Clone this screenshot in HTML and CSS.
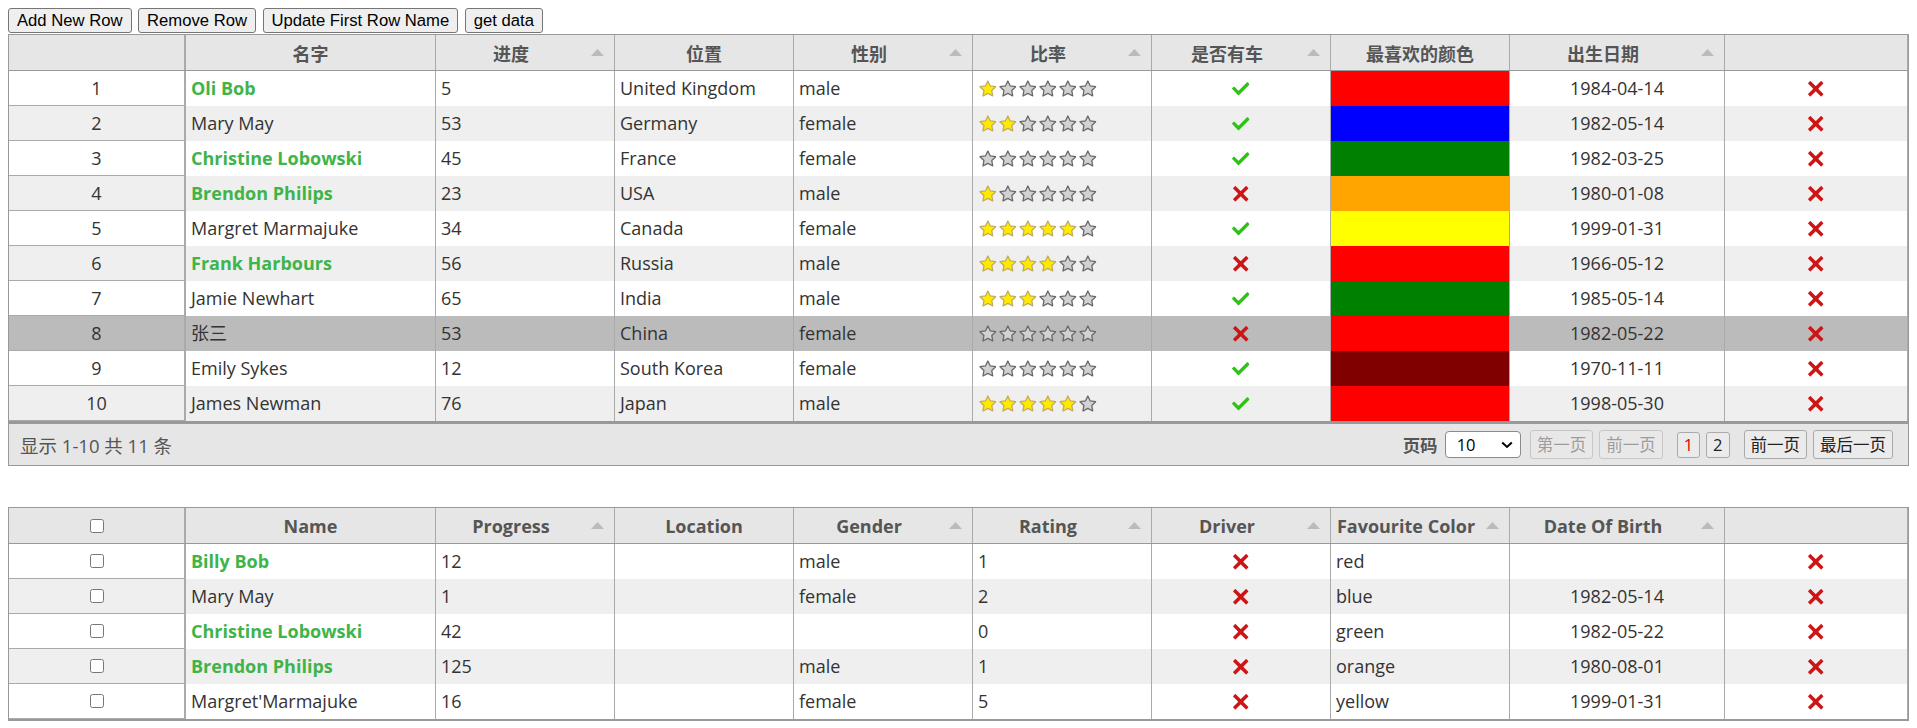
FILE: index.html
```html
<!DOCTYPE html>
<html lang="zh-CN">
<head>
<meta charset="utf-8">
<title>Tabulator</title>
<link rel="stylesheet" href="styles.css">
</head>
<body>
<svg class="defs" aria-hidden="true">
  <defs>
    <symbol id="star-on" viewBox="0 0 512 512"><polygon fill="#FFEA00" stroke="#C1AB60" stroke-width="37.6152" stroke-linecap="round" stroke-linejoin="round" stroke-miterlimit="10" points="259.216,29.942 330.27,173.919 489.16,197.007 374.185,309.08 401.33,467.31 259.216,392.612 117.104,467.31 144.25,309.08 29.274,197.007 188.165,173.919"/></symbol>
    <symbol id="star-off" viewBox="0 0 512 512"><polygon fill="#D2D2D2" stroke="#686868" stroke-width="37.6152" stroke-linecap="round" stroke-linejoin="round" stroke-miterlimit="10" points="259.216,29.942 330.27,173.919 489.16,197.007 374.185,309.08 401.33,467.31 259.216,392.612 117.104,467.31 144.25,309.08 29.274,197.007 188.165,173.919"/></symbol>
    <symbol id="tick" viewBox="0 0 24 24"><path fill="#2DC214" fill-rule="evenodd" clip-rule="evenodd" d="M21.652,3.211c-0.293-0.295-0.77-0.295-1.061,0L9.41,14.34c-0.293,0.297-0.771,0.297-1.062,0L3.449,9.351C3.304,9.203,3.114,9.13,2.923,9.129C2.73,9.128,2.534,9.201,2.387,9.351l-2.165,1.946C0.078,11.445,0,11.63,0,11.823c0,0.194,0.078,0.397,0.223,0.544l4.94,5.184c0.292,0.296,0.771,0.776,1.062,1.07l2.124,2.141c0.292,0.293,0.769,0.293,1.062,0l14.366-14.34c0.293-0.294,0.293-0.777,0-1.071L21.652,3.211z"/></symbol>
    <symbol id="cross" viewBox="0 0 24 24"><path fill="#CE1515" d="M22.245,4.015c0.313,0.313,0.313,0.826,0,1.139l-6.276,6.27c-0.313,0.312-0.313,0.826,0,1.14l6.273,6.272c0.313,0.313,0.313,0.826,0,1.14l-2.285,2.277c-0.314,0.312-0.828,0.312-1.142,0l-6.271-6.271c-0.313-0.313-0.828-0.313-1.141,0l-6.276,6.267c-0.313,0.313-0.826,0.313-1.14,0l-2.282-2.28c-0.313-0.313-0.313-0.826,0-1.14l6.278-6.269c0.313-0.312,0.313-0.826,0-1.14L1.709,5.147c-0.314-0.313-0.314-0.827,0-1.14l2.284-2.278C4.308,1.417,4.821,1.417,5.135,1.73L11.405,8c0.314,0.314,0.828,0.314,1.141,0.001l6.276-6.267c0.312-0.312,0.826-0.312,1.141,0L22.245,4.015z"/></symbol>
  </defs>
</svg>

<div class="toolbar">
  <button class="tbtn">Add New Row</button>
  <button class="tbtn">Remove Row</button>
  <button class="tbtn">Update First Row Name</button>
  <button class="tbtn">get data</button>
</div>

<div class="tabulator">
  <div class="thead grid">
    <div class="hcell first"></div>
    <div class="hcell">名字</div>
    <div class="hcell sort">进度<span class="arrow"></span></div>
    <div class="hcell">位置</div>
    <div class="hcell sort">性别<span class="arrow"></span></div>
    <div class="hcell sort">比率<span class="arrow"></span></div>
    <div class="hcell sort">是否有车<span class="arrow"></span></div>
    <div class="hcell">最喜欢的颜色</div>
    <div class="hcell sort">出生日期<span class="arrow"></span></div>
    <div class="hcell"></div>
  </div>
  <div class="tbody">
    <div class="row grid">
      <div class="cell first">1</div>
      <div class="cell name">Oli Bob</div>
      <div class="cell">5</div>
      <div class="cell">United Kingdom</div>
      <div class="cell">male</div>
      <div class="cell stars"><svg><use href="#star-on"/></svg><svg><use href="#star-off"/></svg><svg><use href="#star-off"/></svg><svg><use href="#star-off"/></svg><svg><use href="#star-off"/></svg><svg><use href="#star-off"/></svg></div>
      <div class="cell icon"><svg><use href="#tick"/></svg></div>
      <div class="cell bg-red"></div>
      <div class="cell center">1984-04-14</div>
      <div class="cell icon"><svg><use href="#cross"/></svg></div>
    </div>
    <div class="row grid even">
      <div class="cell first">2</div>
      <div class="cell">Mary May</div>
      <div class="cell">53</div>
      <div class="cell">Germany</div>
      <div class="cell">female</div>
      <div class="cell stars"><svg><use href="#star-on"/></svg><svg><use href="#star-on"/></svg><svg><use href="#star-off"/></svg><svg><use href="#star-off"/></svg><svg><use href="#star-off"/></svg><svg><use href="#star-off"/></svg></div>
      <div class="cell icon"><svg><use href="#tick"/></svg></div>
      <div class="cell bg-blue"></div>
      <div class="cell center">1982-05-14</div>
      <div class="cell icon"><svg><use href="#cross"/></svg></div>
    </div>
    <div class="row grid">
      <div class="cell first">3</div>
      <div class="cell name">Christine Lobowski</div>
      <div class="cell">45</div>
      <div class="cell">France</div>
      <div class="cell">female</div>
      <div class="cell stars"><svg><use href="#star-off"/></svg><svg><use href="#star-off"/></svg><svg><use href="#star-off"/></svg><svg><use href="#star-off"/></svg><svg><use href="#star-off"/></svg><svg><use href="#star-off"/></svg></div>
      <div class="cell icon"><svg><use href="#tick"/></svg></div>
      <div class="cell bg-green"></div>
      <div class="cell center">1982-03-25</div>
      <div class="cell icon"><svg><use href="#cross"/></svg></div>
    </div>
    <div class="row grid even">
      <div class="cell first">4</div>
      <div class="cell name">Brendon Philips</div>
      <div class="cell">23</div>
      <div class="cell">USA</div>
      <div class="cell">male</div>
      <div class="cell stars"><svg><use href="#star-on"/></svg><svg><use href="#star-off"/></svg><svg><use href="#star-off"/></svg><svg><use href="#star-off"/></svg><svg><use href="#star-off"/></svg><svg><use href="#star-off"/></svg></div>
      <div class="cell icon"><svg><use href="#cross"/></svg></div>
      <div class="cell bg-orange"></div>
      <div class="cell center">1980-01-08</div>
      <div class="cell icon"><svg><use href="#cross"/></svg></div>
    </div>
    <div class="row grid">
      <div class="cell first">5</div>
      <div class="cell">Margret Marmajuke</div>
      <div class="cell">34</div>
      <div class="cell">Canada</div>
      <div class="cell">female</div>
      <div class="cell stars"><svg><use href="#star-on"/></svg><svg><use href="#star-on"/></svg><svg><use href="#star-on"/></svg><svg><use href="#star-on"/></svg><svg><use href="#star-on"/></svg><svg><use href="#star-off"/></svg></div>
      <div class="cell icon"><svg><use href="#tick"/></svg></div>
      <div class="cell bg-yellow"></div>
      <div class="cell center">1999-01-31</div>
      <div class="cell icon"><svg><use href="#cross"/></svg></div>
    </div>
    <div class="row grid even">
      <div class="cell first">6</div>
      <div class="cell name">Frank Harbours</div>
      <div class="cell">56</div>
      <div class="cell">Russia</div>
      <div class="cell">male</div>
      <div class="cell stars"><svg><use href="#star-on"/></svg><svg><use href="#star-on"/></svg><svg><use href="#star-on"/></svg><svg><use href="#star-on"/></svg><svg><use href="#star-off"/></svg><svg><use href="#star-off"/></svg></div>
      <div class="cell icon"><svg><use href="#cross"/></svg></div>
      <div class="cell bg-red"></div>
      <div class="cell center">1966-05-12</div>
      <div class="cell icon"><svg><use href="#cross"/></svg></div>
    </div>
    <div class="row grid">
      <div class="cell first">7</div>
      <div class="cell">Jamie Newhart</div>
      <div class="cell">65</div>
      <div class="cell">India</div>
      <div class="cell">male</div>
      <div class="cell stars"><svg><use href="#star-on"/></svg><svg><use href="#star-on"/></svg><svg><use href="#star-on"/></svg><svg><use href="#star-off"/></svg><svg><use href="#star-off"/></svg><svg><use href="#star-off"/></svg></div>
      <div class="cell icon"><svg><use href="#tick"/></svg></div>
      <div class="cell bg-green"></div>
      <div class="cell center">1985-05-14</div>
      <div class="cell icon"><svg><use href="#cross"/></svg></div>
    </div>
    <div class="row grid hover">
      <div class="cell first">8</div>
      <div class="cell">张三</div>
      <div class="cell">53</div>
      <div class="cell">China</div>
      <div class="cell">female</div>
      <div class="cell stars"><svg><use href="#star-off"/></svg><svg><use href="#star-off"/></svg><svg><use href="#star-off"/></svg><svg><use href="#star-off"/></svg><svg><use href="#star-off"/></svg><svg><use href="#star-off"/></svg></div>
      <div class="cell icon"><svg><use href="#cross"/></svg></div>
      <div class="cell bg-red"></div>
      <div class="cell center">1982-05-22</div>
      <div class="cell icon"><svg><use href="#cross"/></svg></div>
    </div>
    <div class="row grid">
      <div class="cell first">9</div>
      <div class="cell">Emily Sykes</div>
      <div class="cell">12</div>
      <div class="cell">South Korea</div>
      <div class="cell">female</div>
      <div class="cell stars"><svg><use href="#star-off"/></svg><svg><use href="#star-off"/></svg><svg><use href="#star-off"/></svg><svg><use href="#star-off"/></svg><svg><use href="#star-off"/></svg><svg><use href="#star-off"/></svg></div>
      <div class="cell icon"><svg><use href="#tick"/></svg></div>
      <div class="cell bg-maroon"></div>
      <div class="cell center">1970-11-11</div>
      <div class="cell icon"><svg><use href="#cross"/></svg></div>
    </div>
    <div class="row grid even">
      <div class="cell first">10</div>
      <div class="cell">James Newman</div>
      <div class="cell">76</div>
      <div class="cell">Japan</div>
      <div class="cell">male</div>
      <div class="cell stars"><svg><use href="#star-on"/></svg><svg><use href="#star-on"/></svg><svg><use href="#star-on"/></svg><svg><use href="#star-on"/></svg><svg><use href="#star-on"/></svg><svg><use href="#star-off"/></svg></div>
      <div class="cell icon"><svg><use href="#tick"/></svg></div>
      <div class="cell bg-red"></div>
      <div class="cell center">1998-05-30</div>
      <div class="cell icon"><svg><use href="#cross"/></svg></div>
    </div>
  </div>
  <div class="footer">
    <span class="counts">显示 1-10 共 11 条</span>
    <div class="pager">
      <span class="plabel">页码</span>
      <span class="psel-wrap">
        <select class="psel"><option>10</option><option>20</option><option>50</option></select>
        <svg class="chev" viewBox="0 0 12 8"><path d="M1.2 1.5 L6 6 L10.8 1.5" fill="none" stroke="#000" stroke-width="2"/></svg>
      </span>
      <button class="pbtn" disabled>第一页</button>
      <button class="pbtn" disabled>前一页</button>
      <span class="pages">
        <button class="pbtn pnum active">1</button>
        <button class="pbtn pnum">2</button>
      </span>
      <button class="pbtn">前一页</button>
      <button class="pbtn">最后一页</button>
    </div>
  </div>
</div>

<div class="tabulator second">
  <div class="thead grid">
    <div class="hcell first"><input type="checkbox" class="cb"></div>
    <div class="hcell">Name</div>
    <div class="hcell sort">Progress<span class="arrow"></span></div>
    <div class="hcell">Location</div>
    <div class="hcell sort">Gender<span class="arrow"></span></div>
    <div class="hcell sort">Rating<span class="arrow"></span></div>
    <div class="hcell sort">Driver<span class="arrow"></span></div>
    <div class="hcell sort">Favourite Color<span class="arrow"></span></div>
    <div class="hcell sort">Date Of Birth<span class="arrow"></span></div>
    <div class="hcell"></div>
  </div>
  <div class="tbody">
    <div class="row grid">
      <div class="cell first cbcell"><input type="checkbox" class="cb"></div>
      <div class="cell name">Billy Bob</div>
      <div class="cell">12</div>
      <div class="cell"></div>
      <div class="cell">male</div>
      <div class="cell">1</div>
      <div class="cell icon"><svg><use href="#cross"/></svg></div>
      <div class="cell">red</div>
      <div class="cell center"></div>
      <div class="cell icon"><svg><use href="#cross"/></svg></div>
    </div>
    <div class="row grid even">
      <div class="cell first cbcell"><input type="checkbox" class="cb"></div>
      <div class="cell">Mary May</div>
      <div class="cell">1</div>
      <div class="cell"></div>
      <div class="cell">female</div>
      <div class="cell">2</div>
      <div class="cell icon"><svg><use href="#cross"/></svg></div>
      <div class="cell">blue</div>
      <div class="cell center">1982-05-14</div>
      <div class="cell icon"><svg><use href="#cross"/></svg></div>
    </div>
    <div class="row grid">
      <div class="cell first cbcell"><input type="checkbox" class="cb"></div>
      <div class="cell name">Christine Lobowski</div>
      <div class="cell">42</div>
      <div class="cell"></div>
      <div class="cell"></div>
      <div class="cell">0</div>
      <div class="cell icon"><svg><use href="#cross"/></svg></div>
      <div class="cell">green</div>
      <div class="cell center">1982-05-22</div>
      <div class="cell icon"><svg><use href="#cross"/></svg></div>
    </div>
    <div class="row grid even">
      <div class="cell first cbcell"><input type="checkbox" class="cb"></div>
      <div class="cell name">Brendon Philips</div>
      <div class="cell">125</div>
      <div class="cell"></div>
      <div class="cell">male</div>
      <div class="cell">1</div>
      <div class="cell icon"><svg><use href="#cross"/></svg></div>
      <div class="cell">orange</div>
      <div class="cell center">1980-08-01</div>
      <div class="cell icon"><svg><use href="#cross"/></svg></div>
    </div>
    <div class="row grid">
      <div class="cell first cbcell"><input type="checkbox" class="cb"></div>
      <div class="cell">Margret'Marmajuke</div>
      <div class="cell">16</div>
      <div class="cell"></div>
      <div class="cell">female</div>
      <div class="cell">5</div>
      <div class="cell icon"><svg><use href="#cross"/></svg></div>
      <div class="cell">yellow</div>
      <div class="cell center">1999-01-31</div>
      <div class="cell icon"><svg><use href="#cross"/></svg></div>
    </div>
  </div>
</div>
</body>
</html>
```
FILE: styles.css
```css
html {
  overflow: hidden;
}
body {
  margin: 8px 8px 0;
  font-family: "Open Sans", "Noto Sans CJK SC", sans-serif;
  color: #333;
  background: #fff;
}
.defs {
  position: absolute;
  width: 0;
  height: 0;
  overflow: hidden;
}

/* toolbar */
.toolbar {
  display: flex;
  gap: 6.5px;
  margin-bottom: 1px;
}
.tbtn {
  font-family: "Liberation Sans", Arial, sans-serif;
  font-size: 16.67px;
  height: 25px;
  line-height: 23px;
  padding: 0 8px;
  border: 1px solid #767676;
  border-radius: 3px;
  background: #efefef;
  color: #000;
}

/* table */
.tabulator {
  border: 1px solid #999;
  background: #fff;
  font-size: 18px;
}
.tabulator.second {
  margin-top: 41px;
}
.grid {
  display: grid;
  grid-template-columns: 177px 250px 179px 179px 179px 179px 179px 179px 215px 1fr;
}
.thead {
  background: #e6e6e6;
  border-bottom: 1px solid #999;
  color: #555;
  font-weight: 700;
}
.hcell {
  position: relative;
  box-sizing: border-box;
  height: 35px;
  border-right: 1px solid #aaa;
  display: flex;
  align-items: center;
  justify-content: center;
  padding: 0 5px;
  white-space: nowrap;
  overflow: hidden;
}
.hcell.sort {
  padding-right: 33px;
}
.hcell.first {
  border-right-width: 2px;
}
.arrow {
  position: absolute;
  right: 10px;
  top: 14px;
  width: 13px;
  height: 7px;
  background: #bbb;
  clip-path: polygon(50% 0, 100% 100%, 0 100%);
}
.tbody {
  border-bottom: 1px solid #999;
}
.row {
  height: 35px;
}
.row.even {
  background: #efefef;
}
.row.hover {
  background: #bbb;
}
.cell {
  box-sizing: border-box;
  height: 35px;
  border-right: 1px solid #aaa;
  padding: 0 5px;
  line-height: 35px;
  white-space: nowrap;
  overflow: hidden;
}
.cell.first {
  border-right-width: 2px;
  border-bottom: 1px solid #aaa;
  text-align: center;
  line-height: 34px;
}
.cbcell {
  display: flex;
  align-items: center;
  justify-content: center;
}
.cb {
  width: 14px;
  height: 14px;
  margin: 0;
}
.center {
  text-align: center;
}
.name {
  color: #3FB449;
  font-weight: 700;
}
.icon {
  display: flex;
  align-items: center;
  justify-content: center;
}
.icon svg {
  width: 17.5px;
  height: 17.5px;
}
.stars {
  display: flex;
  align-items: center;
}
.stars svg {
  width: 17.5px;
  height: 17.5px;
  margin: 0 1.25px;
  flex: none;
}
.bg-red { background: #ff0000; }
.bg-blue { background: #0000ff; }
.bg-green { background: #008000; }
.bg-orange { background: #ffa500; }
.bg-yellow { background: #ffff00; }
.bg-maroon { background: #800000; }

/* footer */
.footer {
  display: flex;
  align-items: center;
  justify-content: space-between;
  height: 41px;
  border-top: 2px solid #999;
  background: #e6e6e6;
  padding: 0 12px 0 11px;
  color: #555;
  font-size: 17.5px;
}
.counts {
  font-size: 18.5px;
}
.pager {
  display: flex;
  align-items: center;
}
.plabel {
  font-weight: 700;
  margin-right: 7px;
}
.psel-wrap {
  position: relative;
  display: flex;
  margin-right: 6px;
}
.psel {
  appearance: none;
  -webkit-appearance: none;
  box-sizing: border-box;
  width: 76px;
  height: 27px;
  border: 1px solid #8a8a8a;
  border-radius: 4px;
  background: #fff;
  font-family: "Open Sans", sans-serif;
  font-size: 16.5px;
  color: #000;
  padding: 0 0 0 11px;
}
.chev {
  position: absolute;
  right: 8px;
  top: 10px;
  width: 12px;
  height: 8px;
  pointer-events: none;
}
.pages {
  display: flex;
  margin: 0 8px;
}
.pbtn {
  box-sizing: border-box;
  height: 29px;
  margin: 0 3px;
  padding: 0 6px;
  border: 1px solid #aaa;
  border-radius: 3px;
  background: rgba(255, 255, 255, 0.2);
  font-family: "Open Sans", "Noto Sans CJK SC", sans-serif;
  font-size: 16.5px;
  line-height: 27px;
  color: #222;
}
.pbtn:disabled {
  opacity: 0.5;
  color: #555;
}
.pnum {
  height: 26px;
  line-height: 24px;
}
.pnum.active {
  color: #d00;
}
```
